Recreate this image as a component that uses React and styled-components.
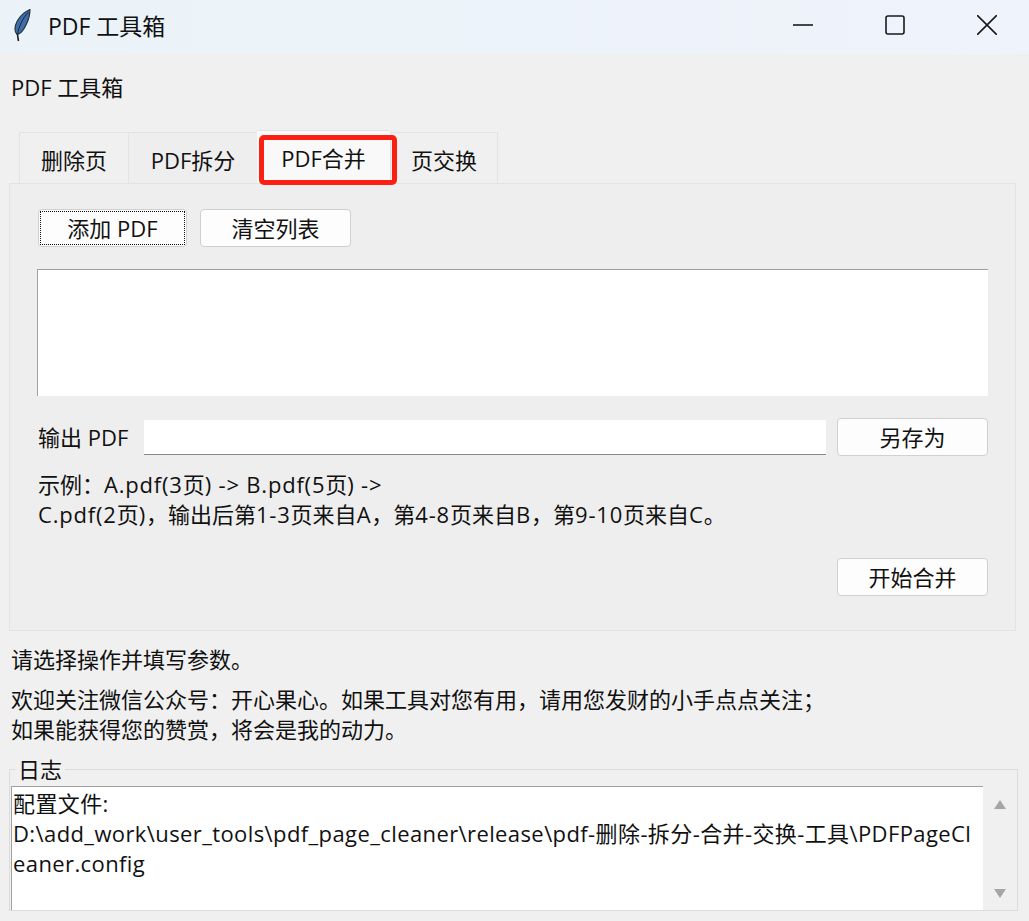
import React from 'react'
import styled, { createGlobalStyle } from 'styled-components'

const GlobalStyle = createGlobalStyle`
html, body {
  margin: 0;
  padding: 0;
  background: #f0f0f0;
  overflow: hidden;
}
* { box-sizing: border-box; }
`

const Window = styled.div`
width: 1029px;
height: 921px;
overflow: hidden;
background: #f0f0f0;
color: #111;
font-family: "Open Sans", "Noto Sans CJK SC", sans-serif;
font-size: 22px;
line-height: 30px;
`

const TitleBar = styled.div`
height: 54px;
display: flex;
align-items: center;
background: linear-gradient(90deg, #ebf3f8, #eff3fb);
`

const TitleIcon = styled.svg`
width: 22px;
height: 34px;
margin-left: 12px;
margin-top: -3px;
`

const TitleText = styled.span`
margin-left: 14px;
font-size: 23px;
margin-top: -2px;
`

const WindowButtons = styled.div`
margin-left: auto;
margin-top: -4px;
padding-right: 32px;
display: flex;
gap: 72px;
`

const Body = styled.div`
padding: 18px 0 0 0;
`

const AppLabel = styled.div`
padding-left: 11px;
height: 30px;
`

const TabBar = styled.div`
display: flex;
height: 53px;
margin-top: 28px;
padding-left: 19px;
align-items: flex-end;
`

const Tab = styled.div`
position: relative;
width: ${p => p.$w}px;
height: ${p => (p.$active ? 53 : 51)}px;
display: flex;
justify-content: center;
padding-top: 12px;
background: ${p => (p.$active ? '#f9f9f9' : p.$dim ? '#eeeeee' : '#f0f0f0')};
border-top: 1px solid #e3e3e3;
border-left: ${p => (p.$dim || p.$active ? 'none' : '1px solid #e3e3e3')};
border-right: ${p => (p.$dim || p.$active ? 'none' : '1px solid #e3e3e3')};
`

const Highlight = styled.div`
position: absolute;
left: 2px;
top: 4px;
width: 138px;
height: 50px;
border: 5px solid #fb1f14;
border-radius: 5px;
z-index: 2;
`

const Panel = styled.div`
width: 1007px;
height: 448px;
margin-left: 9px;
padding: 25px 27px 0 28px;
border: 1px solid #e3e3e3;
background: #eeeeee;
`

const ButtonRow = styled.div`
display: flex;
gap: 13px;
`

const Button = styled.div`
width: ${p => p.$w || 151}px;
height: 38px;
flex: none;
display: flex;
align-items: center;
justify-content: center;
background: #fdfdfd;
border: 1px solid #d0d0d0;
border-radius: 4px;
`

const FocusInner = styled.span`
flex: 1;
align-self: stretch;
margin: 1px;
display: flex;
align-items: center;
justify-content: center;
border: 1px dotted #111;
`

const ListArea = styled.div`
width: 951px;
height: 127px;
margin: 22px 0 0 -1px;
background: #fff;
border-top: 1px solid #a0a0a0;
border-left: 1px solid #a0a0a0;
`

const OutputRow = styled.div`
display: flex;
align-items: center;
margin-top: 22px;
height: 38px;
`

const OutputLabel = styled.span`
width: 106px;
flex: none;
`

const OutputEntry = styled.div`
width: 682px;
height: 35px;
margin-right: 11px;
background: #fff;
border-bottom: 1px solid #8a8a8a;
`

const Example = styled.div`
margin-top: 13px;
white-space: nowrap;
`

const Latin = styled.span`
letter-spacing: 0.8px;
`

const ActionRow = styled.div`
display: flex;
justify-content: flex-end;
margin-top: 29px;
`

const StatusText = styled.div`
padding-left: 11px;
margin-top: 13px;
`

const Notes = styled.div`
padding-left: 11px;
margin-top: 10px;
`

const LogFrame = styled.div`
position: relative;
width: 1009px;
height: 142px;
margin: 25px 0 0 9px;
padding: 16px 0 0 1px;
display: flex;
border: 1px solid #dcdcdc;
`

const LogTitle = styled.span`
position: absolute;
left: 5px;
top: -16px;
padding: 0 3px;
background: #f0f0f0;
`

const LogText = styled.div`
width: 972px;
height: 124px;
flex: none;
padding: 1px 0 0 1px;
background: #fff;
border-top: 1px solid #a0a0a0;
border-left: 1px solid #a0a0a0;
letter-spacing: 0.4px;
white-space: pre;
`

const ScrollBar = styled.div`
flex: 1;
display: flex;
flex-direction: column;
align-items: center;
justify-content: space-between;
padding: 14px 0 12px;
`

const Arrow = styled.svg`
width: 12px;
height: 9px;
`

const App = () => (
  <Window>
    <GlobalStyle />
    <TitleBar>
      <TitleIcon viewBox="0 0 22 34">
        <path d="M6.5 32 C6 29 5.5 27 5.5 24" stroke="#1c1c1c" strokeWidth="1.6" fill="none" />
        <path d="M5 25.5 C2 22 2.5 17 5.5 11.5 C8.5 6.5 13 2.5 18 .5 C18 5 16.5 11 14.5 15 C12 20.5 8.5 25 5 25.5 Z" fill="#3f6da8" stroke="#26303c" strokeWidth="1.1" />
        <path d="M5.5 25 C7 18 10 10 16.5 3" stroke="#16283f" strokeWidth="1" fill="none" />
      </TitleIcon>
      <TitleText>PDF 工具箱</TitleText>
      <WindowButtons>
        <svg width="20" height="20" viewBox="0 0 20 20">
          <path d="M0 10 H20" stroke="#1a1a1a" strokeWidth="1.6" />
        </svg>
        <svg width="20" height="20" viewBox="0 0 20 20">
          <rect x="1" y="1" width="18" height="18" rx="2" fill="none" stroke="#1a1a1a" strokeWidth="1.6" />
        </svg>
        <svg width="20" height="20" viewBox="0 0 20 20">
          <path d="M0 0 L20 20 M20 0 L0 20" stroke="#1a1a1a" strokeWidth="1.6" />
        </svg>
      </WindowButtons>
    </TitleBar>
    <Body>
      <AppLabel>PDF 工具箱</AppLabel>
      <TabBar>
        <Tab $w={110}>删除页</Tab>
        <Tab $w={128} $dim>PDF拆分</Tab>
        <Tab $w={133} $active>
          PDF合并
          <Highlight />
        </Tab>
        <Tab $w={108}>页交换</Tab>
      </TabBar>
      <Panel>
        <ButtonRow>
          <Button $w={149}><FocusInner>添加 PDF</FocusInner></Button>
          <Button>清空列表</Button>
        </ButtonRow>
        <ListArea />
        <OutputRow>
          <OutputLabel>输出 PDF</OutputLabel>
          <OutputEntry />
          <Button>另存为</Button>
        </OutputRow>
        <Example>
          示例：<Latin>A.pdf(3</Latin>页<Latin>) -&gt; B.pdf(5</Latin>页<Latin>) -&gt;</Latin>
          <br />
          <Latin>C.pdf(2</Latin>页<Latin>)</Latin>，输出后第<Latin>1-3</Latin>页来自<Latin>A</Latin>，第<Latin>4-8</Latin>页来自<Latin>B</Latin>，第<Latin>9-10</Latin>页来自<Latin>C</Latin>。
        </Example>
        <ActionRow>
          <Button>开始合并</Button>
        </ActionRow>
      </Panel>
      <StatusText>请选择操作并填写参数。</StatusText>
      <Notes>
        欢迎关注微信公众号：开心果心。如果工具对您有用，请用您发财的小手点点关注；
        <br />
        如果能获得您的赞赏，将会是我的动力。
      </Notes>
      <LogFrame>
        <LogTitle>日志</LogTitle>
        <LogText>{'配置文件:\nD:\\add_work\\user_tools\\pdf_page_cleaner\\release\\pdf-删除-拆分-合并-交换-工具\\PDFPageCl\neaner.config'}</LogText>
        <ScrollBar>
          <Arrow viewBox="0 0 12 9"><path d="M6 0 L12 9 H0 Z" fill="#a6a6a6" /></Arrow>
          <Arrow viewBox="0 0 12 9"><path d="M0 0 H12 L6 9 Z" fill="#a6a6a6" /></Arrow>
        </ScrollBar>
      </LogFrame>
    </Body>
  </Window>
)

export default App
